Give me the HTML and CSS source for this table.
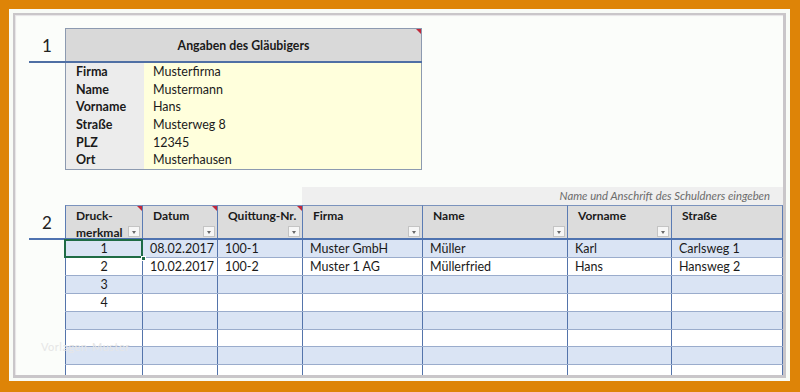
FILE: index.html
```html
<!DOCTYPE html>
<html lang="de">
<head>
<meta charset="utf-8">
<link rel="stylesheet" href="styles.css">
</head>
<body>
<div class="frame">
  <div class="sheet">
    <section class="glaeubiger">
      <div class="g-head">
        <div class="num">1</div>
        <div class="g-title">Angaben des Gläubigers<span class="note"></span></div>
      </div>
      <div class="g-body">
        <div class="g-labels">
          <div>Firma</div><div>Name</div><div>Vorname</div><div>Straße</div><div>PLZ</div><div>Ort</div>
        </div>
        <div class="g-values">
          <div>Musterfirma</div><div>Mustermann</div><div>Hans</div><div>Musterweg 8</div><div>12345</div><div>Musterhausen</div>
        </div>
      </div>
    </section>

    <section class="schuldner">
      <div class="band-row"><div class="band">Name und Anschrift des Schuldners eingeben</div></div>
      <div class="t-head">
        <div class="num">2</div>
        <div class="th c1"><span class="lbl">Druck-<br>merkmal</span><span class="dd"></span><span class="note"></span></div>
        <div class="th c2"><span class="lbl">Datum</span><span class="dd"></span><span class="note"></span></div>
        <div class="th c3"><span class="lbl">Quittung-Nr.</span><span class="dd"></span><span class="note"></span></div>
        <div class="th c4"><span class="lbl">Firma</span><span class="dd"></span></div>
        <div class="th c5"><span class="lbl">Name</span><span class="dd"></span></div>
        <div class="th c6"><span class="lbl">Vorname</span><span class="dd"></span></div>
        <div class="th c7"><span class="lbl">Straße</span></div>
      </div>
      <div class="t-body">
        <div class="tr band-blue">
          <div class="td c1 ctr sel">1<span class="handle"></span></div><div class="td c2">08.02.2017</div><div class="td c3">100-1</div><div class="td c4">Muster GmbH</div><div class="td c5">Müller</div><div class="td c6">Karl</div><div class="td c7">Carlsweg 1</div>
        </div>
        <div class="tr">
          <div class="td c1 ctr">2</div><div class="td c2">10.02.2017</div><div class="td c3">100-2</div><div class="td c4">Muster 1 AG</div><div class="td c5">Müllerfried</div><div class="td c6">Hans</div><div class="td c7">Hansweg 2</div>
        </div>
        <div class="tr band-blue">
          <div class="td c1 ctr">3</div><div class="td c2"></div><div class="td c3"></div><div class="td c4"></div><div class="td c5"></div><div class="td c6"></div><div class="td c7"></div>
        </div>
        <div class="tr">
          <div class="td c1 ctr">4</div><div class="td c2"></div><div class="td c3"></div><div class="td c4"></div><div class="td c5"></div><div class="td c6"></div><div class="td c7"></div>
        </div>
        <div class="tr band-blue">
          <div class="td c1"></div><div class="td c2"></div><div class="td c3"></div><div class="td c4"></div><div class="td c5"></div><div class="td c6"></div><div class="td c7"></div>
        </div>
        <div class="tr">
          <div class="td c1"></div><div class="td c2"></div><div class="td c3"></div><div class="td c4"></div><div class="td c5"></div><div class="td c6"></div><div class="td c7"></div>
        </div>
        <div class="tr band-blue">
          <div class="td c1"></div><div class="td c2"></div><div class="td c3"></div><div class="td c4"></div><div class="td c5"></div><div class="td c6"></div><div class="td c7"></div>
        </div>
        <div class="tr">
          <div class="td c1"></div><div class="td c2"></div><div class="td c3"></div><div class="td c4"></div><div class="td c5"></div><div class="td c6"></div><div class="td c7"></div>
        </div>
      </div>
    </section>
    <div class="watermark">Vorlagen-Muster</div>
  </div>
</div>
</body>
</html>
```

FILE: styles.css
```css
* { box-sizing: border-box; }
html, body { margin: 0; }
body {
  background: #de8407;
  padding: 9px 10px 11px 9px;
  height: 392px;
  font-family: Lato, "Open Sans", sans-serif;
  color: #1a1a1a;
  font-size: 12.5px;
}
.frame {
  height: 372px;
  background: #f8fbf6;
  padding: 4px 4px 3px 4px;
}
.sheet {
  position: relative;
  height: 100%;
  background: #fbfdfa;
  border: 2px solid #c9c6c9;
  border-right-width: 3px;
  border-bottom-width: 3px;
  overflow: hidden;
  box-shadow: inset 1px 1px 1px #e6e4e6;
}

/* section 1 */
.glaeubiger {
  margin: 13px 0 0 14px;
  width: 393px;
}
.num {
  width: 36px;
  flex: none;
  text-align: center;
  font-size: 17px;
  color: #222;
  padding-top: 7px;
}
.g-head {
  display: flex;
  height: 35px;
  border-bottom: 2px solid #4f6fa4;
}
.g-title {
  position: relative;
  flex: 1;
  background: #d9d9d9;
  border: 1px solid #8c9ab0;
  border-bottom: none;
  font-weight: 700;
  font-size: 12.3px;
  text-align: center;
  padding-top: 9px;
}
.note {
  position: absolute;
  top: 0;
  right: 0;
  width: 0;
  height: 0;
  border-top: 5px solid #c0283a;
  border-left: 5px solid transparent;
}
.g-body {
  display: flex;
  margin-left: 36px;
  border: 1px solid #8c9ab0;
  border-top: none;
}
.g-labels {
  width: 78px;
  background: #ececec;
  font-weight: 700;
  padding-left: 10px;
}
.g-values {
  flex: 1;
  background: #ffffdc;
  padding-left: 9px;
}
.g-labels div, .g-values div {
  height: 17.7px;
  line-height: 18px;
}

/* section 2 */
.schuldner {
  margin: 17px 0 0 14px;
}
.band-row {
  display: flex;
  justify-content: flex-end;
}
.band {
  width: 481px;
  height: 18px;
  background: #efefef;
  font-style: italic;
  font-size: 11.3px;
  color: #6c6c6c;
  text-align: right;
  padding: 2px 13px 0 0;
}
.t-head {
  display: flex;
  height: 35px;
  border-bottom: 2px solid #4f73b0;
}
.t-head .num { padding-top: 7px; }
.c1 { width: 77px; flex: none; }
.c2 { width: 75px; flex: none; }
.c3 { width: 85px; flex: none; }
.c4 { width: 120px; flex: none; }
.c5 { width: 145px; flex: none; }
.c6 { width: 104px; flex: none; }
.c7 { width: 112px; flex: none; }
.th {
  position: relative;
  background: #dcdcdc;
  border-top: 1px solid #7b93bd;
  border-left: 1px solid #5b7cb4;
  font-weight: 700;
  font-size: 12px;
  line-height: 17px;
  padding: 1px 0 0 10px;
  white-space: nowrap;
}
.th.c7 { border-right: 1px solid #5b7cb4; }
.dd {
  position: absolute;
  right: 2px;
  bottom: 1px;
  width: 12px;
  height: 11px;
  background: #f6f6f6;
  border: 1px solid #c4c4c4;
}
.dd::after {
  content: "";
  position: absolute;
  left: 3px;
  top: 4px;
  border-top: 3px solid #6a6a6a;
  border-left: 2.5px solid transparent;
  border-right: 2.5px solid transparent;
}
.t-body {
  margin-left: 36px;
}
.tr {
  display: flex;
  height: 17.9px;
  background: #ffffff;
  border-bottom: 1px solid #9aaccc;
}
.tr.band-blue { background: #dae4f4; }
.td {
  border-left: 1px solid #5474ab;
  padding-left: 7px;
  line-height: 18px;
  font-size: 12.5px;
  position: relative;
}
.td.c7 { border-right: 1px solid #5474ab; }
.td.ctr { text-align: center; padding-left: 0; }
.td.sel {
  outline: 2px solid #1f6b45;
  outline-offset: -1px;
  z-index: 1;
}
.handle {
  position: absolute;
  right: -4px;
  bottom: -4px;
  width: 5px;
  height: 5px;
  background: #1f6b45;
  border: 1px solid #fff;
}
.watermark {
  position: absolute;
  left: 26px;
  top: 325px;
  font-size: 11px;
  color: #e6e6e6;
  letter-spacing: 0.5px;
}
```
